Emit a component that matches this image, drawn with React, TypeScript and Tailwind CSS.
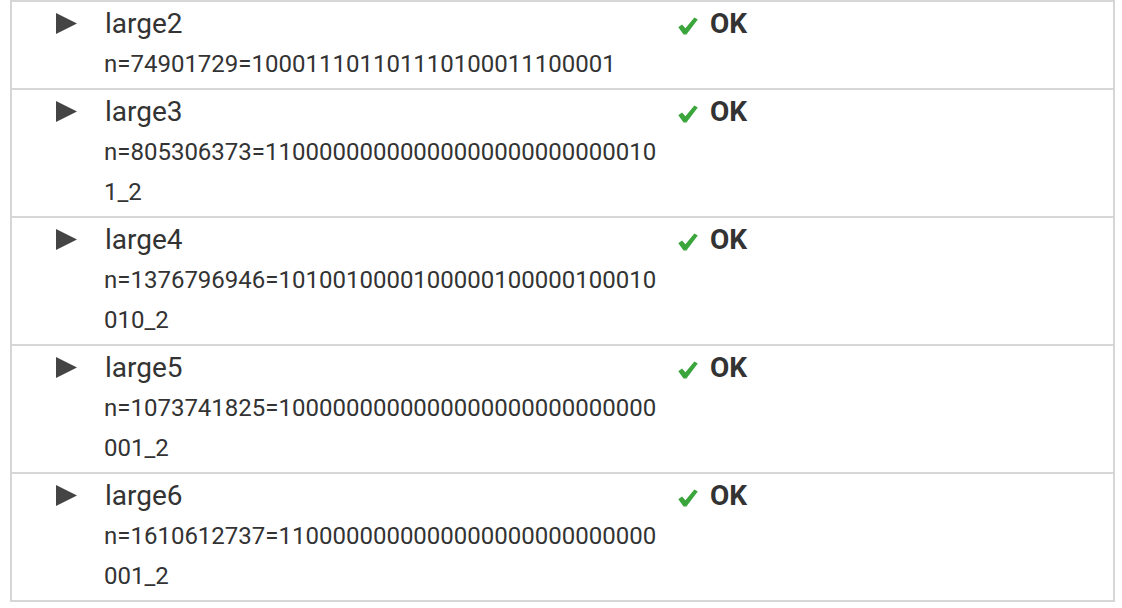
import React from "react";

type Row = { name: string; value: string };

const rows: Row[] = [
  { name: "large2", value: "n=74901729=100011101101110100011100001" },
  { name: "large3", value: "n=805306373=110000000000000000000000000101_2" },
  { name: "large4", value: "n=1376796946=1010010000100000100000100010010_2" },
  { name: "large5", value: "n=1073741825=1000000000000000000000000000001_2" },
  { name: "large6", value: "n=1610612737=1100000000000000000000000000001_2" },
];

function Triangle() {
  return (
    <svg width="21" height="21" viewBox="0 0 21 21" className="block">
      <polygon points="0,0 21,10.5 0,21" fill="#444444" />
    </svg>
  );
}

function Check() {
  return (
    <svg width="20" height="18" viewBox="0 0 20 18" className="block">
      <path d="M0.3 10.2 L4 7.4 L7.4 11.2 L16.4 0.4 L19.8 2.6 L8.4 17.4 L5.6 17.6 Z" fill="#3aa53a" />
    </svg>
  );
}

export default function App() {
  return (
    <div
      className="w-[1122px] h-[608px] bg-white overflow-hidden"
      style={{ fontFamily: "Roboto, 'Liberation Sans', sans-serif" }}
    >
      <div className="ml-[10px] w-[1105px] border-2 border-[#d6d6d6]">
        {rows.map((r, i) => (
          <div
            key={r.name}
            className={
              "flex items-start " + (i < rows.length - 1 ? "border-b-2 border-[#d6d6d6]" : "")
            }
          >
            <div className="w-[92px] shrink-0 pl-[44px] pt-[11px]">
              <Triangle />
            </div>
            <div className="w-[562px] shrink-0 pt-[2px] pb-[4px] text-[#333333]">
              <div className="text-[28px] leading-[40px] pl-[1px]">{r.name}</div>
              <div className="text-[24px] leading-[40px] break-all">{r.value}</div>
            </div>
            <div className="flex items-start pt-[2px] pl-[12px]">
              <div className="mt-[13px]">
                <Check />
              </div>
              <span className="ml-[12px] text-[28px] leading-[40px] font-bold text-[#333333]">OK</span>
            </div>
          </div>
        ))}
      </div>
    </div>
  );
}
